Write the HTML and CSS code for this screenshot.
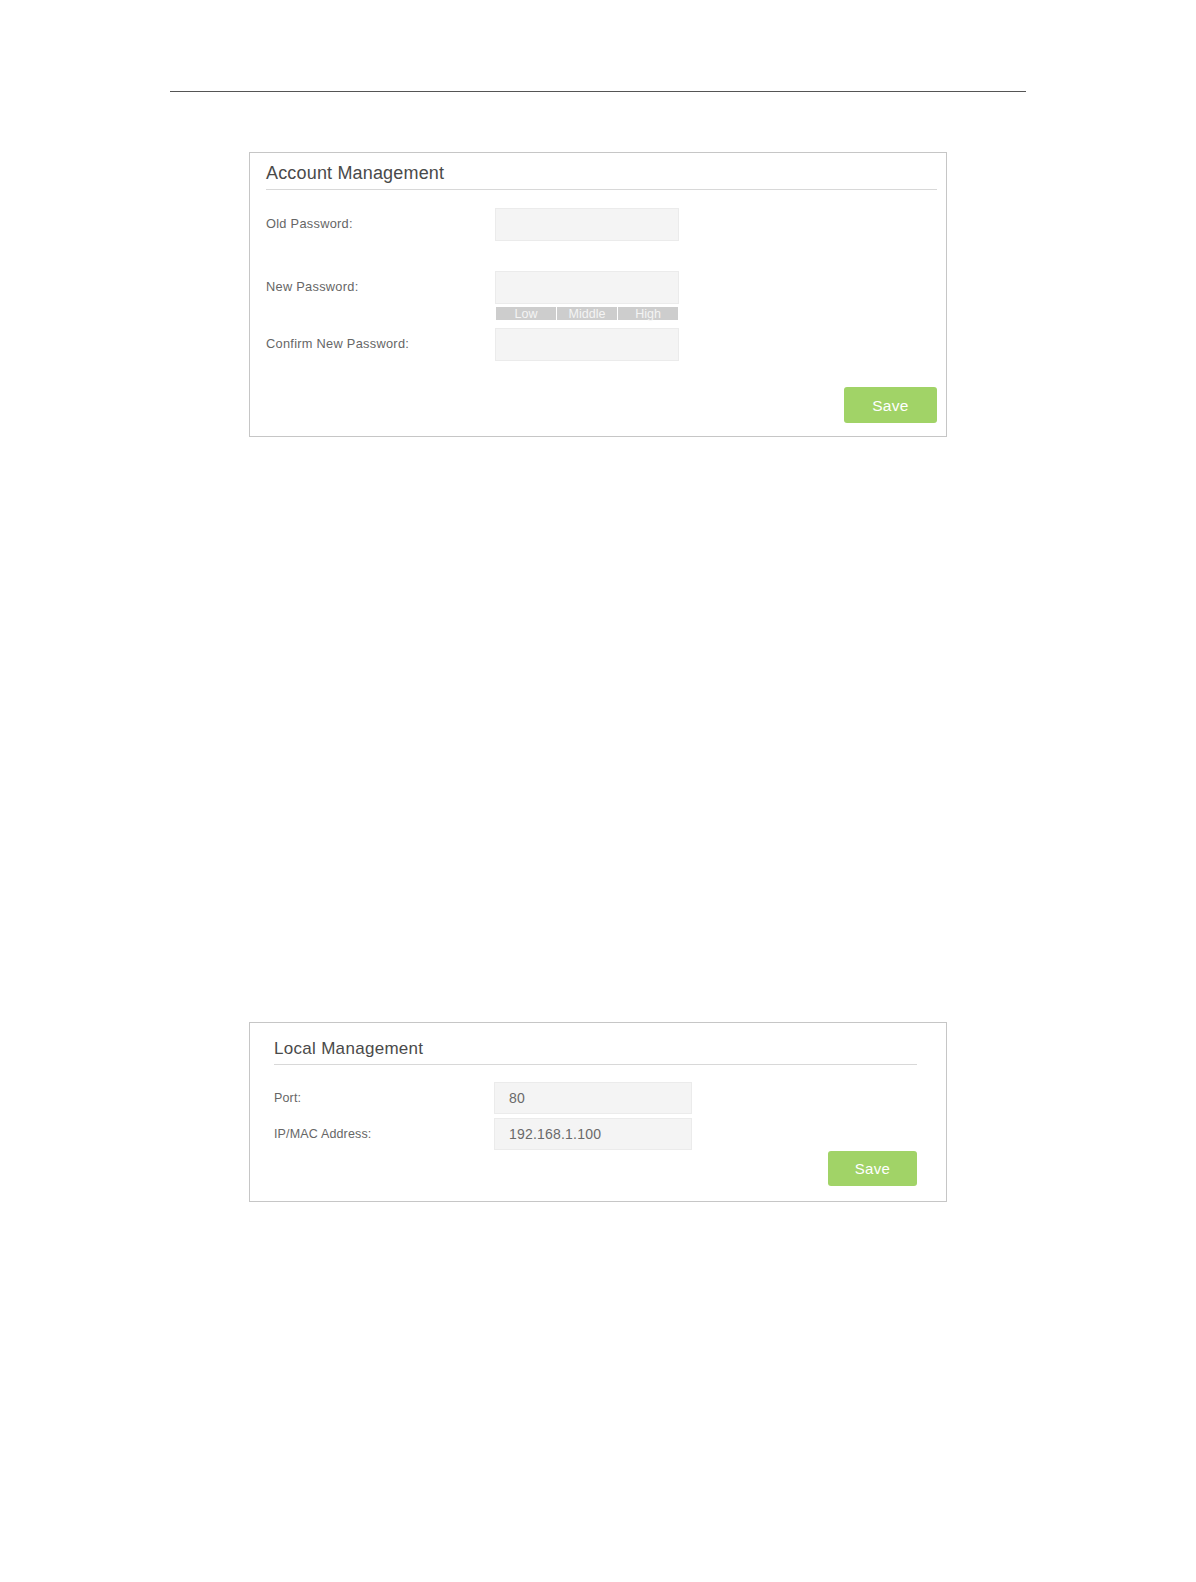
FILE: index.html
```html
<!DOCTYPE html>
<html lang="en">
<head>
<meta charset="utf-8">
<title>Management</title>
<link rel="stylesheet" href="styles.css">
</head>
<body>
<div class="page">
  <div class="rule"></div>

  <section class="card card-account">
    <h2 class="card-title">Account Management</h2>
    <div class="row row-first">
      <div class="label">Old Password:</div>
      <div class="field"><div class="input"></div></div>
    </div>
    <div class="row row-new">
      <div class="label">New Password:</div>
      <div class="field">
        <div class="input"></div>
        <div class="strength">
          <span class="seg">Low</span>
          <span class="seg">Middle</span>
          <span class="seg">High</span>
        </div>
      </div>
    </div>
    <div class="row row-confirm">
      <div class="label">Confirm New Password:</div>
      <div class="field"><div class="input"></div></div>
    </div>
    <div class="actions">
      <button class="btn-save" type="button">Save</button>
    </div>
  </section>

  <section class="card card-local">
    <h2 class="card-title">Local Management</h2>
    <div class="row row-first">
      <div class="label">Port:</div>
      <div class="field"><div class="input">80</div></div>
    </div>
    <div class="row row-ip">
      <div class="label">IP/MAC Address:</div>
      <div class="field"><div class="input">192.168.1.100</div></div>
    </div>
    <div class="actions">
      <button class="btn-save" type="button">Save</button>
    </div>
  </section>
</div>
</body>
</html>
```

FILE: styles.css
```css
html, body {
  margin: 0;
  padding: 0;
  background: #ffffff;
}

body {
  font-family: "Liberation Sans", Arial, sans-serif;
  color: #555;
}

.page {
  padding-top: 91px;
  padding-bottom: 380px;
}

.rule {
  margin-left: 170px;
  width: 856px;
  border-top: 1px solid #555;
}

.card {
  box-sizing: border-box;
  width: 698px;
  margin-left: 249px;
  border: 1px solid #c6c6c6;
  background: #fff;
}

.card-title {
  margin: 0;
  font-weight: normal;
  color: #4a4a4a;
  border-bottom: 1px solid #d8d8d8;
}

.row {
  display: flex;
  align-items: flex-start;
}

.label {
  flex: none;
  color: #666;
}

.field {
  flex: none;
  display: flex;
  flex-direction: column;
}

.input {
  box-sizing: border-box;
  background: #f4f4f4;
  border: 1px solid #ebebeb;
  color: #6a6a6a;
  font-size: 14px;
  letter-spacing: 0.2px;
  padding-left: 14px;
}

.actions {
  display: flex;
  justify-content: flex-end;
}

.btn-save {
  border: none;
  border-radius: 3px;
  background: #a1d367;
  color: #fff;
  font-family: "Liberation Sans", Arial, sans-serif;
  font-size: 15px;
  letter-spacing: 0.3px;
  padding: 0;
  cursor: pointer;
}

/* Account Management card */
.card-account {
  margin-top: 60px;
  padding: 0 9px 13px 16px;
}

.card-account .card-title {
  font-size: 18px;
  line-height: 22px;
  letter-spacing: 0.17px;
  padding: 9px 0 5px 0;
}

.card-account .row-first { margin-top: 18px; }
.card-account .row-new { margin-top: 30px; }
.card-account .row-confirm { margin-top: 8px; }

.card-account .label {
  width: 229px;
  height: 33px;
  line-height: 31px;
  font-size: 12.8px;
  letter-spacing: 0.28px;
}

.card-account .input {
  width: 184px;
  height: 33px;
}

.strength {
  display: flex;
  gap: 1px;
  width: 182px;
  height: 13px;
  margin: 3px 0 0 1px;
}

.seg {
  flex: 1;
  background: #cdcdcd;
  color: #f4f4f4;
  font-size: 12.5px;
  line-height: 14px;
  text-align: center;
}

.card-account .actions { margin-top: 26px; }

.card-account .btn-save {
  width: 93px;
  height: 36px;
  font-size: 15.5px;
  line-height: 38px;
}

/* Local Management card */
.card-local {
  margin-top: 585px;
  padding: 0 29px 15px 24px;
}

.card-local .card-title {
  font-size: 17px;
  line-height: 21px;
  letter-spacing: 0.3px;
  padding: 15px 0 5px 0;
}

.card-local .row-first { margin-top: 17px; }
.card-local .row-ip { margin-top: 4px; }

.card-local .label {
  width: 220px;
  height: 32px;
  line-height: 32px;
  font-size: 12.5px;
  letter-spacing: 0.15px;
}

.card-local .input {
  width: 198px;
  height: 32px;
  line-height: 30px;
}

.card-local .actions { margin-top: 1px; }

.card-local .btn-save {
  width: 89px;
  height: 35px;
  font-size: 15px;
}
```
